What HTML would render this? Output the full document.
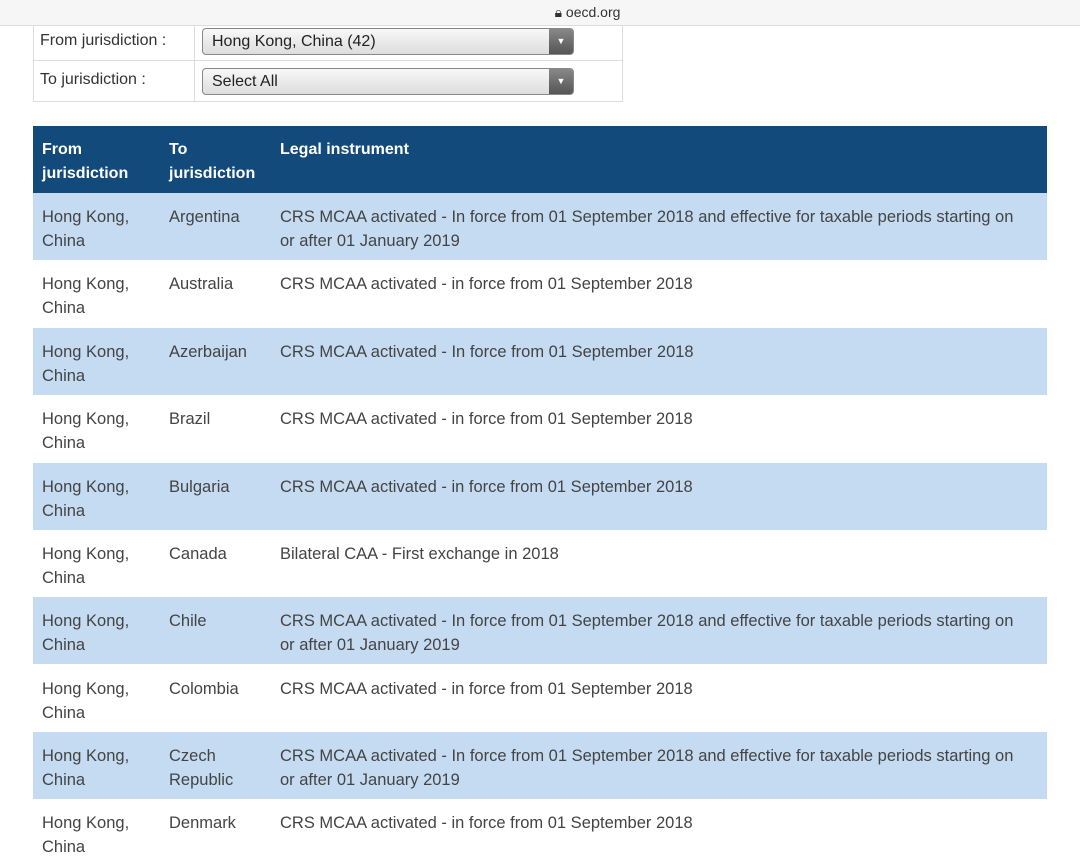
<!DOCTYPE html>
<html><head><meta charset="utf-8"><style>
*{margin:0;padding:0;box-sizing:border-box}
body{width:1080px;height:830px;overflow:hidden;background:#fff;font-family:"Liberation Sans",sans-serif;color:#444;position:relative}
.bar{position:absolute;left:0;top:0;width:1080px;height:26px;background:#f6f6f6;border-bottom:1px solid #ddd;font-size:14px;color:#333;text-align:center;line-height:24px;padding-left:95px}
.form{position:absolute;left:33px;top:26px;width:590px;height:76px;border:1px solid #ddd;border-top:none}
.form .r{position:absolute;left:0;width:100%;height:38px}
.form .lab{position:absolute;left:6px;font-size:16px;color:#333}
.form .sep{position:absolute;left:160px;top:0;bottom:0;border-left:1px solid #ddd}
.sel{position:absolute;left:168px;width:372px;height:27px;border:1px solid #888;border-radius:4px;background:linear-gradient(#f8f8f8,#ddd);font-size:16px;color:#222;padding-left:9px;line-height:25px}
.sel b{position:absolute;right:0;top:0;width:24px;height:25px;background:linear-gradient(#888,#555);border-radius:0 3px 3px 0;color:#fff;font-size:9px;text-align:center;line-height:25px}
.hd{position:absolute;left:33px;top:126px;width:1014px;height:67px;background:#134a7c;color:#fff;font-weight:bold;font-size:16px;line-height:24px}
.row{position:absolute;left:33px;width:1014px;height:67px;font-size:16.5px;line-height:24px}
.row.b{background:#c4dbf2}
.c1,.c2,.c3{position:absolute;top:12px}
.c1{left:9px;width:110px}.c2{left:136px;width:100px}.c3{left:247px;width:748px}
</style></head><body>
<div class="bar">&#128274;&#xFE0E; oecd.org</div>
<div class="form">
<div class="sep"></div>
<div class="r" style="top:0;border-bottom:1px solid #ddd;height:35px"><span class="lab" style="top:6px">From jurisdiction :</span><div class="sel" style="top:2px">Hong Kong, China (42)<b>▼</b></div></div>
<div class="r" style="top:35px"><span class="lab" style="top:10px">To jurisdiction :</span><div class="sel" style="top:7px">Select All<b>▼</b></div></div>
</div>
<div class="hd"><div class="c1">From<br>jurisdiction</div><div class="c2">To<br>jurisdiction</div><div class="c3">Legal instrument</div></div>
<div class="row b" style="top:193px"><div class="c1">Hong Kong,<br>China</div><div class="c2">Argentina</div><div class="c3">CRS MCAA activated - In force from 01 September 2018 and effective for taxable periods starting on or after 01 January 2019</div></div>
<div class="row" style="top:260px"><div class="c1">Hong Kong,<br>China</div><div class="c2">Australia</div><div class="c3">CRS MCAA activated - in force from 01 September 2018</div></div>
<div class="row b" style="top:328px"><div class="c1">Hong Kong,<br>China</div><div class="c2">Azerbaijan</div><div class="c3">CRS MCAA activated - In force from 01 September 2018</div></div>
<div class="row" style="top:395px"><div class="c1">Hong Kong,<br>China</div><div class="c2">Brazil</div><div class="c3">CRS MCAA activated - in force from 01 September 2018</div></div>
<div class="row b" style="top:463px"><div class="c1">Hong Kong,<br>China</div><div class="c2">Bulgaria</div><div class="c3">CRS MCAA activated - in force from 01 September 2018</div></div>
<div class="row" style="top:530px"><div class="c1">Hong Kong,<br>China</div><div class="c2">Canada</div><div class="c3">Bilateral CAA - First exchange in 2018</div></div>
<div class="row b" style="top:597px"><div class="c1">Hong Kong,<br>China</div><div class="c2">Chile</div><div class="c3">CRS MCAA activated - In force from 01 September 2018 and effective for taxable periods starting on or after 01 January 2019</div></div>
<div class="row" style="top:665px"><div class="c1">Hong Kong,<br>China</div><div class="c2">Colombia</div><div class="c3">CRS MCAA activated - in force from 01 September 2018</div></div>
<div class="row b" style="top:732px"><div class="c1">Hong Kong,<br>China</div><div class="c2">Czech<br>Republic</div><div class="c3">CRS MCAA activated - In force from 01 September 2018 and effective for taxable periods starting on or after 01 January 2019</div></div>
<div class="row" style="top:799px"><div class="c1">Hong Kong,<br>China</div><div class="c2">Denmark</div><div class="c3">CRS MCAA activated - in force from 01 September 2018</div></div>
</body></html>
